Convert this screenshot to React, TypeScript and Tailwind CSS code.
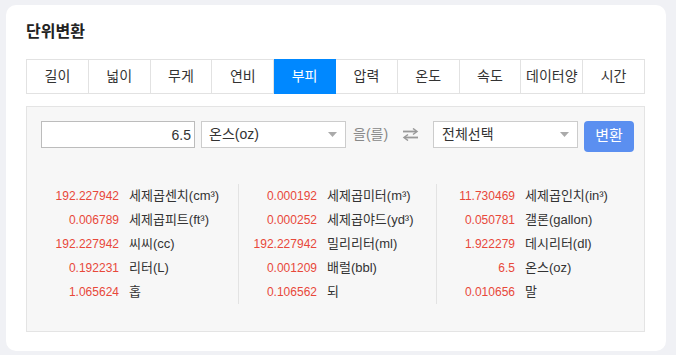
import React, { useState } from "react"

const tabs = ["길이", "넓이", "무게", "연비", "부피", "압력", "온도", "속도", "데이터양", "시간"]

const columns: [string, string][][] = [
  [
    ["192.227942", "세제곱센치(cm³)"],
    ["0.006789", "세제곱피트(ft³)"],
    ["192.227942", "씨씨(cc)"],
    ["0.192231", "리터(L)"],
    ["1.065624", "홉"],
  ],
  [
    ["0.000192", "세제곱미터(m³)"],
    ["0.000252", "세제곱야드(yd³)"],
    ["192.227942", "밀리리터(ml)"],
    ["0.001209", "배럴(bbl)"],
    ["0.106562", "되"],
  ],
  [
    ["11.730469", "세제곱인치(in³)"],
    ["0.050781", "갤론(gallon)"],
    ["1.922279", "데시리터(dl)"],
    ["6.5", "온스(oz)"],
    ["0.010656", "말"],
  ],
]

const Caret = () => (
  <svg width="9" height="5" viewBox="0 0 9 5" className="shrink-0">
    <path d="M0 0 L9 0 L4.5 5 Z" fill="#aaaaaa" />
  </svg>
)

const Swap = () => (
  <svg width="17" height="13" viewBox="0 0 17 13">
    <path d="M1 3.5 H14" stroke="#999" strokeWidth="1.8" />
    <path d="M11 0.5 L15 3.5 L11 6.5" fill="none" stroke="#999" strokeWidth="1.5" />
    <path d="M3 9.5 H16" stroke="#999" strokeWidth="1.8" />
    <path d="M6 6.5 L2 9.5 L6 12.5" fill="none" stroke="#999" strokeWidth="1.5" />
  </svg>
)

const App = () => {
  const [active, setActive] = useState(4)
  const [value, setValue] = useState("6.5")

  return (
    <div
      className="w-[676px] h-[355px] bg-[#f0f1f5] pt-[5px] pl-[6px] overflow-hidden"
      style={{ fontFamily: '"Liberation Sans", "Noto Sans CJK KR", sans-serif' }}
    >
      <div className="w-[660px] h-[346px] bg-white rounded-[10px] pl-[20px] pr-[21px]">
        <h1 className="pt-[17px] text-[16px] leading-[20px] font-bold text-[#222]">단위변환</h1>

        {/* tabs */}
        <div className="mt-[17px] grid grid-cols-10 border-l border-[#e2e2e2]">
          {tabs.map((t, i) => (
            <button
              key={t}
              onClick={() => setActive(i)}
              className={
                i === active
                  ? "h-[35px] bg-[#0088ff] text-white text-[14px] border-y border-r border-[#0088ff]"
                  : "h-[35px] bg-white text-[#333] text-[14px] border-y border-r border-[#e2e2e2]"
              }
            >
              {t}
            </button>
          ))}
        </div>

        {/* panel */}
        <div className="mt-[12px] h-[226px] bg-[#f7f7f7] border border-[#e4e4e4] pl-[14px] pt-[14px]">
          <div className="flex items-start">
            <input
              value={value}
              onChange={(e) => setValue(e.target.value)}
              className="w-[154px] h-[27px] bg-white border border-[#bcbcbc] text-right pr-[3px] text-[14px] text-[#333] outline-none"
            />
            <div className="ml-[6px] w-[145px] h-[27px] bg-white border border-[#cccccc] flex items-center justify-between pl-[7px] pr-[8px] text-[14px] text-[#333]">
              <span>온스(oz)</span>
              <Caret />
            </div>
            <span className="ml-[7px] h-[27px] flex items-center text-[14px] text-[#888]">을(를)</span>
            <span className="ml-[14px] h-[27px] flex items-center">
              <Swap />
            </span>
            <div className="ml-[14px] w-[145px] h-[27px] bg-white border border-[#cccccc] flex items-center justify-between pl-[8px] pr-[8px] text-[14px] text-[#333]">
              <span>전체선택</span>
              <Caret />
            </div>
            <button className="ml-[6px] w-[50px] h-[31px] bg-[#5b8ff0] rounded-[4px] text-white text-[15px]">
              변환
            </button>
          </div>

          {/* results */}
          <div className="mt-[32px] flex">
            {columns.map((col, ci) => (
              <div
                key={ci}
                className={ci === 0 ? "w-[197px]" : "w-[198px] border-l border-[#e3e3e3]"}
              >
                {col.map(([num, label]) => (
                  <div key={label} className="h-[24px] flex items-center">
                    <span className="w-[78px] text-right text-[12px] text-[#e8483a]">{num}</span>
                    <span className="ml-[10px] text-[13px] text-[#333]">{label}</span>
                  </div>
                ))}
              </div>
            ))}
          </div>
        </div>
      </div>
    </div>
  )
}

export default App
